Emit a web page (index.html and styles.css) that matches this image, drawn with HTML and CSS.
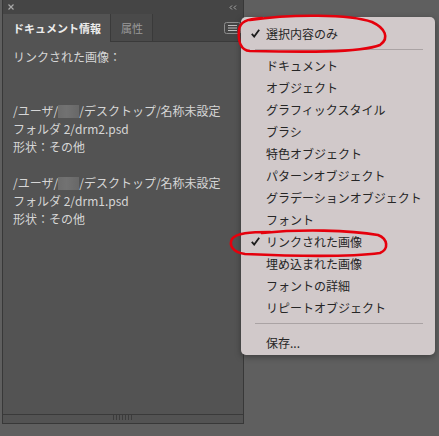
FILE: index.html
```html
<!DOCTYPE html>
<html lang="ja">
<head>
    <meta charset="UTF-8">
    <title>ドキュメント情報</title>
    <link rel="stylesheet" href="styles.css">
</head>
<body>

<div class="panel">
    <div class="titlebar">
        <svg class="close" width="6" height="6" viewBox="0 0 6 6">
            <path d="M0.5 0.5L5.5 5.5M5.5 0.5L0.5 5.5" stroke="#a9a9a9" stroke-width="1.2"/>
        </svg>
        <svg class="collapse" width="8" height="5" viewBox="0 0 8 5">
            <path d="M3 0.5L1 2.5L3 4.5M7 0.5L5 2.5L7 4.5" fill="none" stroke="#a9a9a9" stroke-width="1"/>
        </svg>
    </div>
    <div class="tabs">
        <div class="tab active">ドキュメント情報</div>
        <div class="tab">属性</div>
        <div class="tab-spacer"></div>
        <div class="menu-btn">
            <svg width="17" height="12" viewBox="0 0 17 12">
                <rect x="0.5" y="0.5" width="16" height="11" rx="2" fill="none" stroke="#8c8c8c"/>
                <path d="M4 3.5h9M4 6h9M4 8.5h9" stroke="#bdbdbd" stroke-width="1"/>
            </svg>
        </div>
    </div>
    <div class="content">
        <p>リンクされた画像：</p>
        <p>&nbsp;</p>
        <p>&nbsp;</p>
        <p>/ユーザ/<span class="blur"></span>/デスクトップ/名称未設定</p>
        <p>フォルダ 2/drm2.psd</p>
        <p>形状：その他</p>
        <p>&nbsp;</p>
        <p>/ユーザ/<span class="blur"></span>/デスクトップ/名称未設定</p>
        <p>フォルダ 2/drm1.psd</p>
        <p>形状：その他</p>
    </div>
    <div class="footer">
        <span class="grip"></span>
    </div>
</div>

<!-- flyout menu over the panel -->
<div class="menu">
    <div class="item"><span class="check">
        <svg width="9" height="9" viewBox="0 0 9 9"><path d="M0.8 4.8L3.2 7.6L8.2 0.8" fill="none" stroke="#1c1c1c" stroke-width="1.8"/></svg>
    </span>選択内容のみ</div>
    <div class="sep"></div>
    <div class="item"><span class="check"></span>ドキュメント</div>
    <div class="item"><span class="check"></span>オブジェクト</div>
    <div class="item"><span class="check"></span>グラフィックスタイル</div>
    <div class="item"><span class="check"></span>ブラシ</div>
    <div class="item"><span class="check"></span>特色オブジェクト</div>
    <div class="item"><span class="check"></span>パターンオブジェクト</div>
    <div class="item"><span class="check"></span>グラデーションオブジェクト</div>
    <div class="item"><span class="check"></span>フォント</div>
    <div class="item"><span class="check">
        <svg width="9" height="9" viewBox="0 0 9 9"><path d="M0.8 4.8L3.2 7.6L8.2 0.8" fill="none" stroke="#1c1c1c" stroke-width="1.8"/></svg>
    </span>リンクされた画像</div>
    <div class="item"><span class="check"></span>埋め込まれた画像</div>
    <div class="item"><span class="check"></span>フォントの詳細</div>
    <div class="item"><span class="check"></span>リピートオブジェクト</div>
    <div class="sep sep-last"></div>
    <div class="item"><span class="check"></span>保存...</div>
</div>

<!-- red hand-drawn marks -->
<svg class="marks" width="439" height="436" viewBox="0 0 439 436">
    <path d="M250 20 C 290 14, 350 14, 372 22 C 385 28, 390 38, 380 45 C 360 53, 300 52, 250 51 C 240 50, 238 40, 239 30 C 240 22, 246 19, 262 18"
          fill="none" stroke="#e5000c" stroke-width="2.6" stroke-linecap="round"/>
    <path d="M262 233 C 300 229, 350 230, 378 235 C 388 239, 389 249, 380 253 C 350 257, 290 256, 245 254 C 232 252, 229 245, 232 239 C 236 233, 250 232, 270 232"
          fill="none" stroke="#e5000c" stroke-width="2.6" stroke-linecap="round"/>
</svg>

</body>
</html>
```

FILE: styles.css
```css
body {
    margin: 0;
    background: #5f5f5f;
    font-family: "Noto Sans CJK JP", "Noto Sans", sans-serif;
    width: 439px;
    height: 436px;
    position: relative;
    overflow: hidden;
}

.panel {
    margin-left: 2px;
    width: 240px;
    height: 423px;
    border: 1px solid #383838;
    border-top: none;
    display: flex;
    flex-direction: column;
    background: #535353;
}

.titlebar {
    height: 14px;
    background: #454545;
    display: flex;
    justify-content: space-between;
    align-items: center;
    padding: 0 6px 0 5px;
}

.close,
.collapse {
    display: block;
}

.tabs {
    height: 28px;
    display: flex;
    background: #454545;
    border-bottom: 1px solid #3a3a3a;
    box-sizing: border-box;
}

.tab {
    padding: 0 9px 0 10px;
    display: flex;
    align-items: center;
    font-size: 11px;
    color: #9a9a9a;
    background: #4a4a4a;
    border-right: 1px solid #3a3a3a;
}

.tab.active {
    background: #535353;
    color: #ececec;
    font-weight: bold;
    margin-bottom: -1px;
}

.tab-spacer {
    flex: 1;
}

.menu-btn {
    display: flex;
    align-items: center;
    padding-right: 2px;
}

.menu-btn svg {
    display: block;
}

.content {
    flex: 1;
    padding: 6px 10px 0;
    color: #d6d6d6;
    font-size: 12px;
}

.content p {
    margin: 0;
    line-height: 18px;
    white-space: nowrap;
}

.blur {
    display: inline-block;
    width: 21px;
    height: 13px;
    vertical-align: -2px;
    background: linear-gradient(90deg, #6c6c6c, #727272 40%, #686868);
    filter: blur(0.6px);
}

.footer {
    height: 8px;
    border-top: 1px solid #3a3a3a;
    display: flex;
    justify-content: center;
}

.grip {
    width: 19px;
    height: 5px;
    margin-left: -2px;
    background: repeating-linear-gradient(90deg, #3c3c3c 0 1px, transparent 1px 3px);
}

/* flyout menu */
.menu {
    position: absolute;
    left: 241px;
    top: 17px;
    width: 194px;
    padding: 5px 0 2px;
    background: #d1c9ca;
    border-radius: 5px;
    box-shadow: 0 2px 6px rgba(0, 0, 0, 0.35);
    box-sizing: border-box;
    color: #262626;
    font-size: 12px;
}

.item {
    height: 22px;
    display: flex;
    align-items: center;
    white-space: nowrap;
}

.check {
    width: 25px;
    display: flex;
    justify-content: flex-end;
    padding-right: 6px;
    box-sizing: border-box;
}

.check svg {
    display: block;
}

.sep {
    height: 1px;
    margin: 5px 12px 4px 14px;
    background: #aaa3a4;
}

.sep-last {
    margin: 5px 12px 7px 14px;
}

.marks {
    position: absolute;
    left: 0;
    top: 0;
    pointer-events: none;
}
```
